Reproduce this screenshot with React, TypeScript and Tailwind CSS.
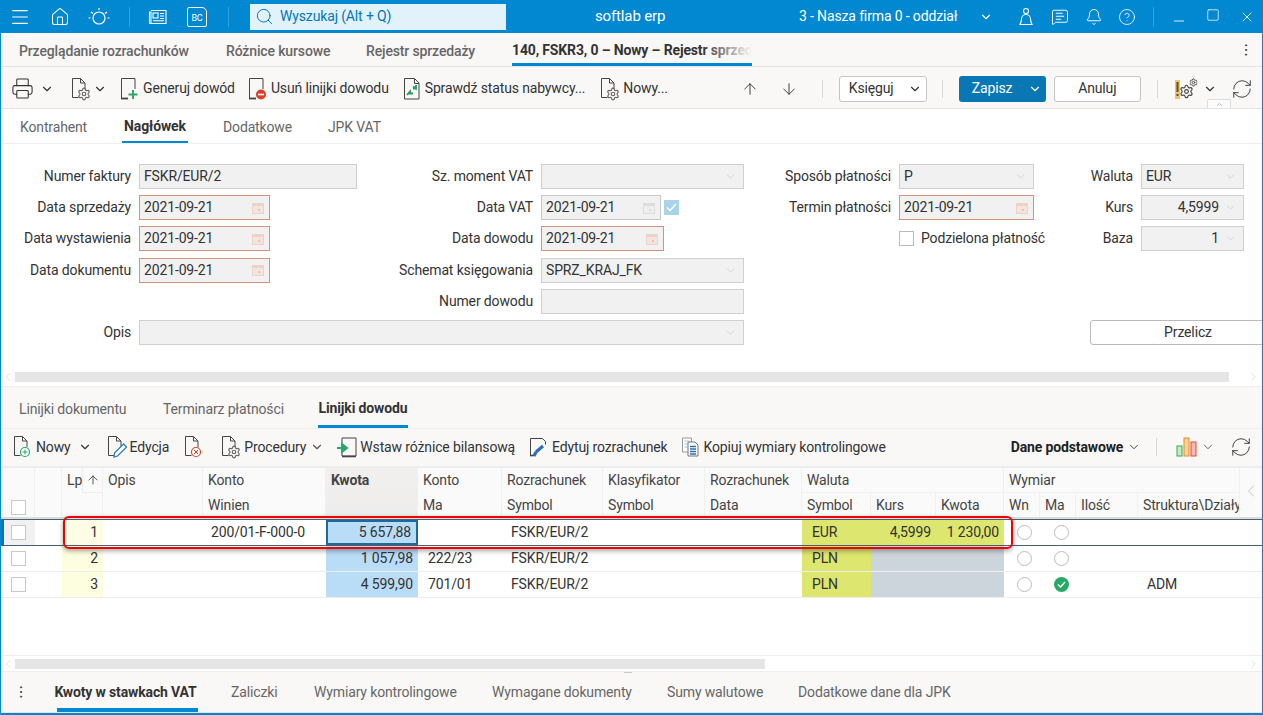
import { ReactNode } from 'react';
import {
  ArrowDown,
  ArrowUp,
  Bell,
  ChevronDown,
  ChevronLeft,
  ChevronRight,
  ChevronUp,
  CircleHelp,
  EllipsisVertical,
  Home,
  Menu,
  MessageSquareText,
  Minus,
  Printer,
  RefreshCw,
  Search,
  Settings,
  Square,
  X,
} from 'lucide-react';

const gridCols =
  'grid grid-cols-[34px_27px_41px_100px_123px_92px_84px_101px_102px_97px_69px_65px_68px_36px_36px_62px_102px_1fr]';

function DocIcon({ children }: { children?: ReactNode }) {
  return (
    <svg width="22" height="24" viewBox="0 0 22 24" fill="none" className="shrink-0">
      <path d="M3.5 1.5h8l4.5 4.5v6M3.5 1.5v19h6" stroke="#444" strokeWidth="1" />
      <path d="M11.5 1.5v4.5h4.5" stroke="#444" strokeWidth="1" />
      {children}
    </svg>
  );
}

// page without the folded corner, heavier at the bottom
function PlainDoc({ children }: { children?: ReactNode }) {
  return (
    <svg width="22" height="24" viewBox="0 0 22 24" fill="none" className="shrink-0">
      <path d="M3.5 21V1.500h13.500V12" stroke="#444" strokeWidth="1" />
      <path d="M3 21.500h7" stroke="#444" strokeWidth="1.800" />
      {children}
    </svg>
  );
}

function Gear() {
  return <Settings x={8} y={10} size={14} stroke="#666" strokeWidth={2} fill="#f9f8f7" />;
}

function CalIcon({ muted }: { muted?: boolean }) {
  return (
    <svg width="12" height="12" viewBox="0 0 12 12" className="shrink-0">
      <rect x="0.5" y="1.5" width="11" height="10" fill={muted ? '#eee' : '#f3e4dc'} stroke={muted ? '#ddd' : '#ecd3c7'} />
      <rect x="0.5" y="1.5" width="11" height="2.5" fill={muted ? '#ddd' : '#ecd3c7'} />
      <rect x="6" y="7" width="2" height="2" fill={muted ? '#ddd' : '#e5c4b4'} />
    </svg>
  );
}

function Btn({ icon, label, className }: { icon: ReactNode; label: string; className: string }) {
  return (
    <div className={`flex items-center shrink-0 gap-[3px] ${className}`}>
      {icon}
      <span>{label}</span>
    </div>
  );
}

function Sep({ className }: { className: string }) {
  return <div className={`w-px h-[18px] bg-[#d8d8d8] shrink-0 ${className}`} />;
}

function DateField({ error, muted }: { error?: boolean; muted?: boolean }) {
  return (
    <div
      className={`h-[25px] bg-[#f1f1f1] border flex items-center justify-between pl-1 pr-[5px] ${
        error ? 'border-[#d39280]' : 'border-[#c8c8c8]'
      }`}
    >
      <span>2021-09-21</span>
      <CalIcon muted={muted} />
    </div>
  );
}

function TextField({ value, right, select }: { value?: string; right?: boolean; select?: boolean }) {
  return (
    <div className="h-[25px] bg-[#f1f1f1] border border-[#cfcfcf] flex items-center pl-1 pr-[6px]">
      <span className={`flex-1 ${right ? 'text-right pr-[5px]' : ''}`}>{value}</span>
      {select && <ChevronDown size={13} strokeWidth={1} className="text-[#bbb]" />}
    </div>
  );
}

function Label({ text }: { text: string }) {
  return <div className="text-right leading-[25px] text-[#333]">{text}</div>;
}

function Empty() {
  return <div />;
}

function FormGrid() {
  return (
    <div className="grid grid-cols-[130px_218px_168px_203px_139px_135px_91px_103px] gap-x-2 auto-rows-[25px] gap-y-[6.2px] pt-5 h-[226px] overflow-hidden">
      <Label text="Numer faktury" />
      <TextField value="FSKR/EUR/2" />
      <Label text="Sz. moment VAT" />
      <TextField select />
      <Label text="Sposób płatności" />
      <TextField value="P" select />
      <Label text="Waluta" />
      <TextField value="EUR" select />

      <Label text="Data sprzedaży" />
      <div className="w-[131px]">
        <DateField error />
      </div>
      <Label text="Data VAT" />
      <div className="flex items-center gap-[3px]">
        <div className="w-[120px]">
          <DateField muted />
        </div>
        <div className="w-[15px] h-[15px] bg-[#a9d3e8] flex items-center justify-center">
          <svg width="11" height="9" viewBox="0 0 11 9" fill="none">
            <path d="M1 4.5l3 3 6-6.5" stroke="#fff" strokeWidth="1.5" />
          </svg>
        </div>
      </div>
      <Label text="Termin płatności" />
      <DateField error />
      <Label text="Kurs" />
      <TextField value="4,5999" right select />

      <Label text="Data wystawienia" />
      <div className="w-[131px]">
        <DateField error />
      </div>
      <Label text="Data dowodu" />
      <div className="w-[123px]">
        <DateField error />
      </div>
      <Empty />
      <div className="flex items-center gap-[7px] whitespace-nowrap text-[#333]">
        <div className="w-[15px] h-[15px] shrink-0 bg-white border border-[#bbb]" />
        <span>Podzielona płatność</span>
      </div>
      <Label text="Baza" />
      <TextField value="1" right select />

      <Label text="Data dokumentu" />
      <div className="w-[131px]">
        <DateField error />
      </div>
      <Label text="Schemat księgowania" />
      <TextField value="SPRZ_KRAJ_FK" select />
      <Empty />
      <Empty />
      <Empty />
      <Empty />

      <Empty />
      <Empty />
      <Label text="Numer dowodu" />
      <TextField />
      <Empty />
      <Empty />
      <Empty />
      <Empty />

      <Label text="Opis" />
      <div className="col-span-3">
        <TextField select />
      </div>
      <Empty />
      <Empty />
      <div className="col-span-2 pl-[48px]">
        <div className="w-[196px] h-[25px] bg-white border border-[#bbb] rounded-[3px] flex items-center justify-center text-[#333]">
          Przelicz
        </div>
      </div>
    </div>
  );
}

function HeadCell({ children, className = '' }: { children?: ReactNode; className?: string }) {
  return (
    <div className={`pl-[5px] leading-[25px] whitespace-nowrap overflow-hidden text-[#444] border-r border-[#f1f0ef] ${className}`}>
      {children}
    </div>
  );
}

function Check() {
  return <div className="w-[15px] h-[15px] bg-white border border-[#c9c9c9]" />;
}

function Radio({ on }: { on?: boolean }) {
  if (on) {
    return (
      <div className="w-[15px] h-[15px] rounded-full bg-[#27a866] flex items-center justify-center">
        <svg width="9" height="7" viewBox="0 0 9 7" fill="none">
          <path d="M1 3.5l2.5 2.5 4.5-5" stroke="#fff" strokeWidth="1.4" />
        </svg>
      </div>
    );
  }
  return <div className="w-[15px] h-[15px] rounded-full bg-white border border-[#bcbcbc]" />;
}

interface Line {
  lp: number;
  winien?: string;
  kwota: string;
  ma?: string;
  waluta: string;
  kurs?: string;
  kwotaWal?: string;
  maOn?: boolean;
  dzial?: string;
  active?: boolean;
}

const lines: Line[] = [
  { lp: 1, winien: '200/01-F-000-0', kwota: '5 657,88', waluta: 'EUR', kurs: '4,5999', kwotaWal: '1 230,00', active: true },
  { lp: 2, kwota: '1 057,98', ma: '222/23', waluta: 'PLN' },
  { lp: 3, kwota: '4 599,90', ma: '701/01', waluta: 'PLN', maOn: true, dzial: 'ADM' },
];

function Row({ line }: { line: Line }) {
  const cur = line.kurs ? 'bg-[#dde66f]' : 'bg-[#cdd5dc]';
  return (
    <div
      className={`${gridCols} leading-[25px] text-[#333] ${
        line.active ? 'h-[27px] border-y border-[#48616f] bg-white' : 'h-[26px] border-b border-[#eeeeee] bg-white'
      }`}
    >
      <div className={`flex items-center justify-center ${line.active ? 'bg-[#f1f1f1] border-l-[3px] border-[#0a77b5] pr-[3px]' : ''}`}>
        <Check />
      </div>
      <div />
      <div className={`text-right pr-[5px] ${line.active ? 'bg-[#fdfde6]' : 'bg-[#fdfde0]'}`}>{line.lp}</div>
      <div />
      <div className="pl-2 whitespace-nowrap">{line.winien}</div>
      <div className={`text-right pr-[5px] bg-[#b9dcf7] ${line.active ? 'border-2 border-[#1b6a99] leading-[21px]' : ''}`}>{line.kwota}</div>
      <div className="pl-[10px]">{line.ma}</div>
      <div className="pl-[9px]">FSKR/EUR/2</div>
      <div />
      <div />
      <div className="pl-[10px] bg-[#dde66f]">{line.waluta}</div>
      <div className={`text-right pr-[5px] ${cur}`}>{line.kurs}</div>
      <div className={`text-right pr-[5px] ${cur}`}>{line.kwotaWal}</div>
      <div className="flex items-center justify-center pl-[5px]">
        <Radio />
      </div>
      <div className="flex items-center justify-center pl-[6px]">
        <Radio on={line.maOn} />
      </div>
      <div />
      <div className="pl-[9px]">{line.dzial}</div>
      <div />
    </div>
  );
}

function LinesTable() {
  return (
    <div className="relative h-[187px] bg-white">
      <div className={`${gridCols} h-[51px] bg-[#fbfafa] border-b-2 border-[#dcdcdc] grid-rows-[25px_24px]`}>
        <HeadCell className="row-span-2 flex items-end pb-[1px]">
          <div className="pl-[5px] pb-[1px]">
            <Check />
          </div>
        </HeadCell>
        <HeadCell className="row-span-2" />
        <HeadCell className="flex">
          Lp
          <div className="ml-auto w-[20px] flex justify-center items-center border-l border-b border-[#eeeeee]">
            <ArrowUp size={14} strokeWidth={1.5} className="text-[#444]" />
          </div>
        </HeadCell>
        <HeadCell>Opis</HeadCell>
        <HeadCell>Konto</HeadCell>
        <HeadCell className="row-span-2 bg-gradient-to-b from-[#f1f0ef] to-[#eeeded] font-bold text-[#333]">Kwota</HeadCell>
        <HeadCell>Konto</HeadCell>
        <HeadCell>Rozrachunek</HeadCell>
        <HeadCell>Klasyfikator</HeadCell>
        <HeadCell>Rozrachunek</HeadCell>
        <HeadCell className="col-span-3 border-b">Waluta</HeadCell>
        <HeadCell className="col-span-4 border-b">Wymiar</HeadCell>
        <div className="row-span-2 flex items-center justify-center pb-[4px]">
          <ChevronLeft size={20} strokeWidth={1} className="text-[#bbb]" />
        </div>

        <HeadCell />
        <HeadCell />
        <HeadCell>Winien</HeadCell>
        <HeadCell>Ma</HeadCell>
        <HeadCell>Symbol</HeadCell>
        <HeadCell>Symbol</HeadCell>
        <HeadCell>Data</HeadCell>
        <HeadCell>Symbol</HeadCell>
        <HeadCell>Kurs</HeadCell>
        <HeadCell>Kwota</HeadCell>
        <HeadCell>Wn</HeadCell>
        <HeadCell>Ma</HeadCell>
        <HeadCell>Ilość</HeadCell>
        <HeadCell>Struktura\Działy</HeadCell>
      </div>
      {lines.map(line => (
        <Row key={line.lp} line={line} />
      ))}
      {/* Red marker drawn on top of the first line */}
      <div className="absolute left-[62px] top-[48px] w-[950px] h-[33px] border-2 border-[#f00000] rounded-[6px] shadow-[0_2px_5px_rgba(0,0,0,0.35)]" />
    </div>
  );
}

function ScrollBar({ thumb, height }: { thumb: string; height: string }) {
  return (
    <div className={`flex items-center bg-white ${height}`}>
      <ChevronLeft size={14} strokeWidth={1} className="text-[#ccc] w-[14px] shrink-0" />
      <div className={`h-[10px] bg-[#e5e5e5] ${thumb}`} />
      <div className="flex-1" />
      <ChevronRight size={14} strokeWidth={1} className="text-[#ccc] w-[15px] mr-[1px] shrink-0" />
    </div>
  );
}

export default function App() {
  return (
    <div
      className="w-[1263px] h-[715px] overflow-hidden bg-white border-x border-b-2 border-[#0288d1] text-[14px] tracking-[-0.01em] text-[#333] flex flex-col"
      style={{ fontFamily: 'Roboto, sans-serif' }}
    >
      {/* Title bar */}
      <div className="h-[33px] bg-[#0288d1] -mx-px flex items-center text-white shrink-0">
        <Menu size={22} strokeWidth={1.25} className="ml-[9px] shrink-0" />
        <Home size={20} strokeWidth={1.25} className="ml-[19px] shrink-0" />
        <svg width="24" height="24" viewBox="0 0 24 24" fill="none" stroke="#fff" strokeWidth="1.2" className="ml-[17px] shrink-0">
          <circle cx="12" cy="13" r="6" />
          <path d="M12 3v2M4 7l2 1.5M20 7l-2 1.5M1.5 13h2M20.5 13h2" />
        </svg>
        <div className="w-px h-5 bg-[#2fa0dc] ml-[18px] shrink-0" />
        <svg width="20" height="18" viewBox="0 0 20 18" fill="none" stroke="#fff" strokeWidth="1.1" className="ml-[17px] shrink-0">
          <path d="M4 2.5h15v13H2.5V4H4v11" />
          <rect x="6" y="5" width="5" height="5" />
          <path d="M13 5.5h4M13 8h4M13 10.5h4M6 12.8h11" />
        </svg>
        <div className="ml-[20px] w-[20px] h-[20px] border border-white rounded-[2px] rounded-tr-[5px] flex items-center justify-center text-[9px] leading-none pt-1 shrink-0">
          BC
        </div>
        <div className="w-px h-5 bg-[#2fa0dc] ml-[21px] shrink-0" />
        <div className="ml-[21px] w-[256px] h-[26px] bg-[#e1f2fa] flex items-center text-[#0277bd] shrink-0">
          <Search size={19} strokeWidth={1.25} className="ml-[5px]" />
          <span className="ml-[6px]">Wyszukaj (Alt + Q)</span>
        </div>
        <span className="ml-[89px] w-[102px] shrink-0 text-[15px]">softlab erp</span>
        <span className="ml-[102px] w-[166px] shrink-0 whitespace-nowrap">3 - Nasza firma 0 - oddział</span>
        <ChevronDown size={14} strokeWidth={2} className="ml-[14px] shrink-0" />
        <svg width="18" height="20" viewBox="0 0 18 20" fill="none" stroke="#fff" strokeWidth="1.1" className="ml-[24px] shrink-0">
          <circle cx="9" cy="4" r="2.5" />
          <path d="M3 17.5c1-2 1.5-3 1.5-5.5a4.5 4.5 0 0 1 9 0c0 2.5.5 3.5 1.5 5.5z" />
        </svg>
        <MessageSquareText size={18} strokeWidth={1.25} className="ml-[16px] shrink-0" />
        <Bell size={18} strokeWidth={1.25} className="ml-[16px] shrink-0" />
        <CircleHelp size={18} strokeWidth={1.1} className="ml-[15px] shrink-0" />
        <div className="w-px h-5 bg-[#2fa0dc] ml-[17px] shrink-0" />
        <Minus size={16} strokeWidth={1.25} className="ml-[17px] mt-2 shrink-0" />
        <Square size={14} strokeWidth={1.25} className="ml-[19px] -mt-1 shrink-0" />
        <X size={16} strokeWidth={1.25} className="ml-[19px] shrink-0" />
      </div>

      {/* Document tabs */}
      <div className="h-[34px] bg-[#f9f8f7] border-b border-[#e4e4e4] flex items-stretch shrink-0 font-medium text-[#666]">
        <div className="ml-[18px] w-[207px] flex items-center pt-1">Przeglądanie rozrachunków</div>
        <div className="w-[140px] flex items-center pt-1">Różnice kursowe</div>
        <div className="w-[146px] flex items-center pt-1">Rejestr sprzedaży</div>
        <div className="relative w-[240px] flex items-center font-bold text-[#333] border-b-[3px] border-[#0288d1] pt-[4px] whitespace-nowrap overflow-hidden">
          140, FSKR3, 0 – Nowy – Rejestr sprzedaży
          <div className="absolute right-0 top-0 bottom-0 w-[50px] bg-gradient-to-r from-transparent to-[#f9f8f7]" />
        </div>
        <div className="flex-1" />
        <EllipsisVertical size={16} strokeWidth={1.5} className="self-center mr-[8px] text-[#444]" />
      </div>

      {/* Toolbar */}
      <div className="relative h-[42px] bg-[#f9f8f7] border-b border-[#e4e4e4] flex items-center shrink-0 pt-[2px]">
        <Printer size={23} strokeWidth={1.1} className="ml-[10px] shrink-0" />
        <ChevronDown size={14} className="ml-[6px] shrink-0" />
        <div className="ml-[15px] shrink-0">
          <DocIcon>
            <Gear />
          </DocIcon>
        </div>
        <ChevronDown size={14} className="ml-[2px] shrink-0" />
        <Btn
          className="ml-[11px]"
          label="Generuj dowód"
          icon={
            <PlainDoc>
              <path d="M15 13v9M10.5 17.500h9" stroke="#31a86b" strokeWidth="2" />
            </PlainDoc>
          }
        />
        <Btn
          className="ml-[11px]"
          label="Usuń linijki dowodu"
          icon={
            <PlainDoc>
              <circle cx="15" cy="17.500" r="5" fill="#d9402a" />
              <path d="M12 17.500h6" stroke="#fff" strokeWidth="1.600" />
            </PlainDoc>
          }
        />
        <Btn
          className="ml-[13px]"
          label="Sprawdź status nabywcy..."
          icon={
            <svg width="20" height="24" viewBox="0 0 20 24" fill="none" className="shrink-0">
              <path d="M2.5 1.5h10l4.500 4.500v16H2.500z" stroke="#444" />
              <path d="M12.500 2v4.500H17" stroke="#444" />
              <path d="M5 18l3-3.500v2h3M14 8v3.500l-3-2M11 11.500h3.500" stroke="#2b9c5f" strokeWidth="1.800" />
            </svg>
          }
        />
        <Btn
          className="ml-[13px]"
          label="Nowy..."
          icon={
            <DocIcon>
              <Gear />
            </DocIcon>
          }
        />
        <ArrowUp size={18} strokeWidth={1.25} className="ml-[73px] shrink-0" />
        <ArrowDown size={18} strokeWidth={1.25} className="ml-[21px] shrink-0" />
        <Sep className="ml-[24px]" />
        <div className="ml-[16px] w-[88px] h-[26px] bg-white border border-[#c4c4c4] rounded-[3px] flex items-center justify-between pl-[9px] pr-[4px] shrink-0">
          <span>Księguj</span>
          <ChevronDown size={14} />
        </div>
        <Sep className="ml-[15px]" />
        <div className="ml-[16px] w-[87px] h-[26px] bg-[#0a77b5] rounded-[3px] text-white flex items-center pl-[13px] pr-[4px] justify-between shrink-0">
          <span>Zapisz</span>
          <ChevronDown size={14} />
        </div>
        <div className="ml-[8px] w-[87px] h-[26px] bg-white border border-[#c4c4c4] rounded-[3px] flex items-center justify-center shrink-0">
          Anuluj
        </div>
        <Sep className="ml-[16px]" />
        <svg width="24" height="24" viewBox="0 0 24 24" fill="none" className="ml-[17px] shrink-0">
          <rect x="0" y="3" width="5" height="19" fill="#e9c46a" />
          <rect x="1.500" y="5" width="2" height="10" fill="#6b4f10" />
          <rect x="1.500" y="17" width="2" height="2" fill="#6b4f10" />
          <Settings x={4} y={7} size={15} stroke="#444" strokeWidth={1.800} />
          <Settings x={14} y={1} size={9} stroke="#444" strokeWidth={2.400} />
        </svg>
        <ChevronDown size={14} className="ml-[4px] shrink-0" />
        <RefreshCw size={22} strokeWidth={1} className="ml-[14px] shrink-0" />
        <div className="absolute left-[1206px] bottom-0 w-[24px] h-[9px] bg-[#fbfbfb] border border-b-0 border-[#dddddd] rounded-t-[2px] flex justify-center">
          <ChevronUp size={9} className="text-[#aaa]" />
        </div>
      </div>

      {/* Form tabs */}
      <div className="h-[35px] bg-white border-b border-[#eeeeee] flex shrink-0 text-[#666] pt-[2px]">
        <div className="ml-[19px] w-[102px] flex items-center">Kontrahent</div>
        <div className="w-[66px] flex items-center justify-center font-bold text-[#333] border-b-2 border-[#0288d1] whitespace-nowrap">
          Nagłówek
        </div>
        <div className="ml-[35px] w-[105px] flex items-center">Dodatkowe</div>
        <div className="flex items-center">JPK VAT</div>
      </div>

      <FormGrid />
      <ScrollBar thumb="w-[1214px]" height="h-[13px]" />

      {/* Lower tabs */}
      <div className="h-[43px] bg-[#f9f8f7] border-y border-[#eeeeee] flex shrink-0 text-[#666] mt-[3px]">
        <div className="ml-[18px] w-[144px] flex items-center pt-1">Linijki dokumentu</div>
        <div className="w-[155px] flex items-center pt-1">Terminarz płatności</div>
        <div className="w-[90px] flex items-center justify-center font-bold text-[#333] border-b-[3px] border-[#0288d1] pt-[4px] whitespace-nowrap">
          Linijki dowodu
        </div>
      </div>

      {/* Lines toolbar */}
      <div className="h-[39px] bg-[#f9f8f7] border-b-2 border-[#ededed] flex items-center shrink-0 pb-[1px]">
        <Btn
          className="ml-[10px]"
          label="Nowy"
          icon={
            <DocIcon>
              <circle cx="14" cy="17" r="4.500" fill="#fff" stroke="#27a866" strokeWidth="1.200" />
              <path d="M14 14.500v5M11.500 17h5" stroke="#27a866" />
            </DocIcon>
          }
        />
        <ChevronDown size={14} className="ml-[7px] shrink-0" />
        <Btn
          className="ml-[13px]"
          label="Edycja"
          icon={
            <DocIcon>
              <path d="M9 22l.5-4 9-9 3 3-9 9z" fill="#fff" stroke="#2f7fc1" strokeWidth="1.300" />
            </DocIcon>
          }
        />
        <div className="ml-[13px] shrink-0">
          <DocIcon>
            <circle cx="14" cy="17" r="4.500" fill="#fff" stroke="#d9402a" strokeWidth="1.200" />
            <path d="M12 15l4 4M16 15l-4 4" stroke="#d9402a" />
          </DocIcon>
        </div>
        <Btn
          className="ml-[15px]"
          label="Procedury"
          icon={
            <DocIcon>
              <Gear />
            </DocIcon>
          }
        />
        <ChevronDown size={14} className="ml-[4px] shrink-0 text-[#555]" />
        <Btn
          className="ml-[12px]"
          label="Wstaw różnice bilansową"
          icon={
            <svg width="21" height="24" viewBox="0 0 21 24" fill="none" className="shrink-0">
              <path d="M6 8V3h14v18H6v-3" stroke="#444" />
              <path d="M6 21.500h14" stroke="#444" strokeWidth="1.600" />
              <path d="M1 13h8M6 9l5 4-5 4z" fill="#27a866" stroke="#27a866" strokeWidth="2" />
            </svg>
          }
        />
        <Btn
          className="ml-[12px]"
          label="Edytuj rozrachunek"
          icon={
            <svg width="22" height="24" viewBox="0 0 22 24" fill="none" className="shrink-0">
              <path d="M3.500 20V3.500h12l3 3v3" stroke="#444" />
              <path d="M3 20.500h4" stroke="#444" strokeWidth="1.600" />
              <path d="M7 21l2-4M9 17l7-6" stroke="#2f6fb5" strokeWidth="3.200" />
            </svg>
          }
        />
        <Btn
          className="ml-[13px]"
          label="Kopiuj wymiary kontrolingowe"
          icon={
            <svg width="20" height="22" viewBox="0 0 20 22" fill="none" className="shrink-0">
              <path d="M1.500 2h9v14h-9z" fill="#fff" stroke="#999" />
              <path d="M3.500 5h5M3.500 8h3M3.500 11h3" stroke="#9cc2e5" />
              <path d="M7 6h7l3 3v11H7z" fill="#fff" stroke="#777" />
              <path d="M9 10.500h6M9 13h6M9 15.500h6M9 18h6" stroke="#2f6fb5" strokeWidth="1.400" />
            </svg>
          }
        />
        <span className="ml-[125px] font-bold whitespace-nowrap text-[#222]">Dane podstawowe</span>
        <ChevronDown size={14} strokeWidth={1.5} className="ml-[4px] shrink-0" />
        <Sep className="ml-[15px]" />
        <svg width="22" height="22" viewBox="0 0 22 22" fill="none" className="ml-[19px] shrink-0">
          <rect x="1" y="10" width="5" height="10" fill="#cbe6c4" stroke="#3aa655" />
          <rect x="8" y="2" width="5" height="18" fill="#f8d39b" stroke="#e88c1f" />
          <rect x="15" y="6" width="5" height="14" fill="#f7b8ad" stroke="#e04a3a" />
        </svg>
        <ChevronDown size={14} strokeWidth={1.5} className="ml-[3px] shrink-0 text-[#555]" />
        <RefreshCw size={22} strokeWidth={1} className="ml-[15px] shrink-0" />
      </div>

      <LinesTable />
      <ScrollBar thumb="w-[750px]" height="h-[17px] border-y border-[#eeeeee]" />

      {/* Bottom tabs */}
      <div className="relative flex-1 bg-[#f9f8f7] border-b border-[#e4e4e4] flex text-[#666]">
        <div className="absolute left-[623px] top-0 w-[8px] h-px bg-[#c8c8c8]" />
        <EllipsisVertical size={16} strokeWidth={1.5} className="self-center ml-[12px] text-[#444] shrink-0" />
        <div className="ml-[28px] w-[141px] flex items-center justify-center font-bold text-[#333] border-b-[4px] border-[#0288d1] pt-[4px] pr-[4px] whitespace-nowrap">
          Kwoty w stawkach VAT
        </div>
        <div className="ml-[33px] w-[83px] flex items-center">Zaliczki</div>
        <div className="w-[178px] flex items-center whitespace-nowrap">Wymiary kontrolingowe</div>
        <div className="w-[175px] flex items-center whitespace-nowrap">Wymagane dokumenty</div>
        <div className="w-[131px] flex items-center whitespace-nowrap">Sumy walutowe</div>
        <div className="flex items-center whitespace-nowrap">Dodatkowe dane dla JPK</div>
      </div>
    </div>
  );
}
